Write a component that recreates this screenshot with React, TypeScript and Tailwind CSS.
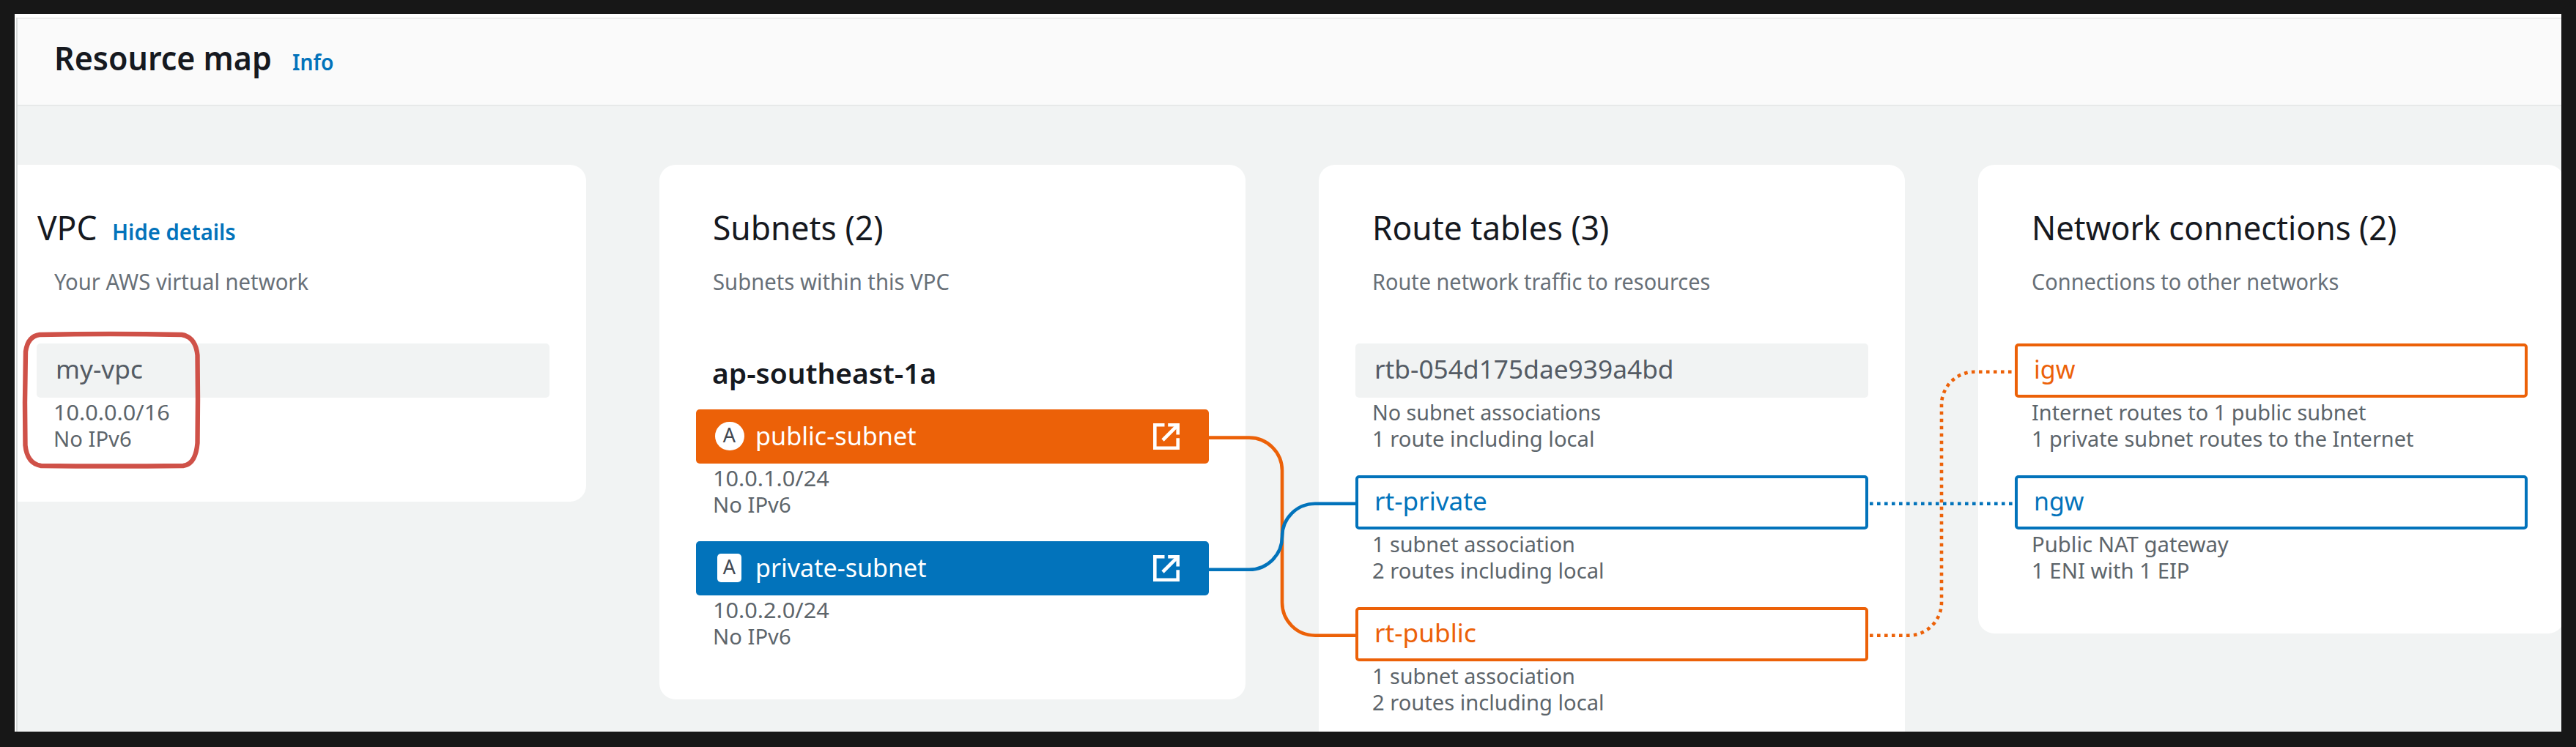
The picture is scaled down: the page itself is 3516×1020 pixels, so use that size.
import React, { useLayoutEffect, useRef, useState } from 'react';

type Tone = 'neutral' | 'public' | 'private';

/** One line of text, fitted horizontally so that its ink ends at a set width. */
function Line({ children, ink, className = '' }: { children: string; ink: number; className?: string }) {
  const ref = useRef<HTMLSpanElement>(null);
  const [scale, setScale] = useState(1);
  useLayoutEffect(() => {
    const el = ref.current;
    const ctx = document.createElement('canvas').getContext('2d');
    if (!el || !ctx) return;
    const s = getComputedStyle(el);
    ctx.font = `${s.fontWeight} ${s.fontSize} "Noto Sans"`;
    const m = ctx.measureText(children);
    setScale(ink / (m.actualBoundingBoxRight + m.actualBoundingBoxLeft));
  }, [children, ink]);
  return (
    <span
      ref={ref}
      className={`block w-max origin-left whitespace-pre ${className}`}
      style={{ transform: `scaleX(${scale})` }}
    >
      {children}
    </span>
  );
}

function ExternalIcon() {
  return (
    <svg className="mr-[40px] mt-[1px] h-9 w-9" viewBox="0 0 36 36" fill="none" stroke="#fff" strokeWidth="4.6">
      <path d="M15.5 2.3H2.3V33.7H33.7V20.2" />
      <path d="M20.2 2.3H33.7V15.6" />
      <path d="M33 3L13 23" />
    </svg>
  );
}

const boxTone: Record<Tone, string> = {
  neutral: 'bg-[#f1f3f3] text-[#545b64]',
  public: 'border-4 border-[#ec6108] text-[#ec6108]',
  private: 'border-4 border-[#0273bb] text-[#0273bb]',
};

function Details({ rows }: { rows: [string, number][] }) {
  return (
    <div className="mt-px pl-[22.5px] pt-px text-[29px] leading-[36px] text-[#5d656b]">
      {rows.map(([t, w]) => (
        <Line key={t} ink={w}>{t}</Line>
      ))}
    </div>
  );
}

function Resource({ name, ink, tone, rows }: { name: string; ink: number; tone: Tone; rows: [string, number][] }) {
  return (
    <div className="h-[180px]">
      <div className={`box-border flex h-[74px] w-[700px] rounded-[5px] ${boxTone[tone]}`}>
        <Line
          ink={ink}
          className={`text-[35px] ${tone === 'neutral' ? 'ml-[25.5px] leading-[70px]' : 'ml-[21.5px] leading-[62px]'}`}
        >
          {name}
        </Line>
      </div>
      <Details rows={rows} />
    </div>
  );
}

function Subnet({ name, ink, tone, cidr }: { name: string; ink: number; tone: Tone; cidr: string }) {
  const isPublic = tone === 'public';
  return (
    <div className="h-[180px]">
      <div
        className={`flex h-[74px] w-[700px] items-center rounded-[5px] pb-[2px] ${isPublic ? 'bg-[#ec6108]' : 'bg-[#0273bb]'}`}
      >
        <div
          className={`flex h-[39px] shrink-0 items-center justify-center bg-white text-[27px] leading-none text-[#414750] ${
            isPublic ? 'ml-[25.5px] w-[40px] rounded-full' : 'ml-[29px] mr-[3.5px] w-[33px] rounded-[5px]'
          }`}
        >
          <span className="-mt-[3px]">A</span>
        </div>
        <div className="ml-[15.5px] flex-1 text-[35px] leading-[72px] text-white">
          <Line ink={ink} className="-mt-px">{name}</Line>
        </div>
        <ExternalIcon />
      </div>
      <Details rows={[[cidr, 157], ['No IPv6', 104]]} />
    </div>
  );
}

function Card({ title, titleInk, note, noteInk, className, children }: {
  title: string; titleInk: number; note: string; noteInk: number; className: string; children: React.ReactNode;
}) {
  return (
    <section className={`w-[800px] shrink-0 bg-white pl-[50px] pt-[55px] ${className}`}>
      <h2 className="pl-[22.5px] text-[45px] leading-[61px] text-[#16191f]">
        <Line ink={titleInk}>{title}</Line>
      </h2>
      <div className="mt-6 pl-[22.5px] text-[30px] leading-[40px] text-[#687078]">
        <Line ink={noteInk}>{note}</Line>
      </div>
      {children}
    </section>
  );
}

export default function App() {
  return (
    <div className="relative h-[1020px] w-[3516px] overflow-hidden bg-[#171717] pb-[21px] pl-[20px] pr-[20px] pt-[19px] font-['Noto_Sans',sans-serif]">
      <div className="h-[980px] overflow-hidden bg-white pl-[2px] pt-[5px]">
        <div className="h-full border-l-2 border-[#d9dcdc]">
          <header className="flex h-[121px] items-start border-b-2 border-t-2 border-b-[#e7e9e9] border-t-[#ececec] bg-[#fafafa] pl-[49.5px] text-[#16191f]">
            <h1 className="mt-[22px] w-[325.5px] text-[45px] font-semibold leading-[61px]">
              <Line ink={291}>Resource map</Line>
            </h1>
            <div className="mt-[39px] text-[30px] font-semibold leading-[40px] text-[#0273bb]">
              <Line ink={55}>Info</Line>
            </div>
          </header>

          <main className="flex h-[854px] items-start gap-[100px] overflow-hidden bg-[#f1f3f3] pt-[80px]">
            <section className="h-[460px] w-[776px] shrink-0 rounded-r-[22px] bg-white pl-[26px] pt-[55px]">
              <div className="flex items-start">
                <h2 className="w-[102.5px] pl-px text-[45px] leading-[61px] text-[#16191f]">
                  <Line ink={81}>VPC</Line>
                </h2>
                <div className="mt-[17px] text-[30px] font-semibold leading-[40px] text-[#0273bb]">
                  <Line ink={166}>Hide details</Line>
                </div>
              </div>
              <div className="mb-[64px] mt-6 pl-[23.5px] text-[30px] leading-[40px] text-[#687078]">
                <Line ink={347}>Your AWS virtual network</Line>
              </div>
              <Resource name="my-vpc" ink={116} tone="neutral" rows={[['10.0.0.0/16', 156], ['No IPv6', 104]]} />
            </section>

            <Card title="Subnets (2)" titleInk={229} note="Subnets within this VPC" noteInk={322} className="h-[730px] rounded-[22px]">
              <h3 className="mb-[25px] mt-[79px] pl-[22px] text-[38px] font-semibold leading-[50px] text-[#16191f]">
                <Line ink={303}>ap-southeast-1a</Line>
              </h3>
              <Subnet name="public-subnet" ink={217} tone="public" cidr="10.0.1.0/24" />
              <Subnet name="private-subnet" ink={231} tone="private" cidr="10.0.2.0/24" />
            </Card>

            <Card title="Route tables (3)" titleInk={318} note="Route network traffic to resources" noteInk={459} className="h-[820px] rounded-[22px]">
              <div className="mt-[64px]">
                <Resource name="rtb-054d175dae939a4bd" ink={404} tone="neutral" rows={[['No subnet associations', 309], ['1 route including local', 300]]} />
                <Resource name="rt-private" ink={150} tone="private" rows={[['1 subnet association', 273], ['2 routes including local', 314]]} />
                <Resource name="rt-public" ink={136} tone="public" rows={[['1 subnet association', 273], ['2 routes including local', 314]]} />
              </div>
            </Card>

            <Card title="Network connections (2)" titleInk={493} note="Connections to other networks" noteInk={418} className="h-[640px] rounded-[22px]">
              <div className="mt-[64px]">
                <Resource name="igw" ink={55} tone="public" rows={[['Internet routes to 1 public subnet', 455], ['1 private subnet routes to the Internet', 519]]} />
                <Resource name="ngw" ink={67} tone="private" rows={[['Public NAT gateway', 267], ['1 ENI with 1 EIP', 213]]} />
              </div>
            </Card>
          </main>
        </div>
      </div>

      {/* connectors between the resources, and the hand-drawn highlight */}
      <svg className="pointer-events-none absolute left-0 top-0" width="3516" height="1020" fill="none" strokeWidth="4.6">
        <path stroke="#ec6108" d="M1650 597.6H1705A45 45 0 0 1 1750 642.6V822.7A45 45 0 0 0 1795 867.7H1850" />
        <path stroke="#0273bb" d="M1650 777.7H1705A45 45 0 0 0 1750 732.7A45 45 0 0 1 1795 687.7H1850" />
        <path stroke="#0273bb" strokeDasharray="4.6 5.4" d="M2552 687.7H2750" />
        <path stroke="#ec6108" strokeDasharray="4.6 5.4" d="M2552 867.7H2605A45 45 0 0 0 2650 822.7V552.8A45 45 0 0 1 2695 507.8H2749" />
        <path
          stroke="#cf5148"
          strokeWidth="6.4"
          strokeLinejoin="round"
          d="M54 457Q150 455 248 457Q267 460 269.500 485L270 545L269.500 605Q267 634 250 636Q150 637 56 636Q37 633 34.500 608L34 550L35 480Q38 459 54 457Z"
        />
      </svg>
    </div>
  );
}
